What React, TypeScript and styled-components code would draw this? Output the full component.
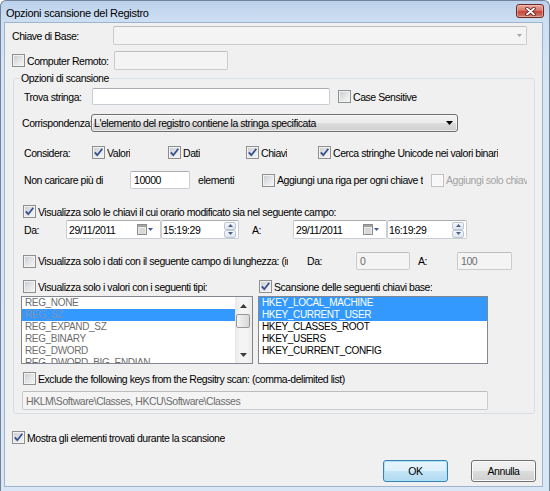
import React from "react";
import styled, { createGlobalStyle } from "styled-components";

const GlobalStyle = createGlobalStyle`
  * { box-sizing: border-box; }
  html, body { margin: 0; padding: 0; background: #ffffff; }
  body {
    font-family: "Liberation Sans", Arial, sans-serif;
    font-size: 10.5px;
    letter-spacing: -0.45px;
    color: #000;
  }
`;

const Window = styled.div`
  width: 550px;
  height: 491px;
  display: flex;
  flex-direction: column;
  border: 1px solid #72839a;
  border-bottom: none;
  border-radius: 6px 6px 0 0;
  background: linear-gradient(180deg, #bcd1eb 0px, #cddff2 21px, #d6e4f4 60px, #d9e6f5 100%);
  overflow: hidden;
`;

const TitleBar = styled.div`
  height: 21px;
  flex: none;
  display: flex;
  align-items: flex-start;
  padding: 0 5px;
`;

const Title = styled.div`
  font-size: 11px;
  letter-spacing: -0.3px;
  line-height: 13px;
  margin-top: 6px;
`;

const CloseButton = styled.div`
  margin-left: auto;
  margin-top: 3px;
  width: 28px;
  height: 14px;
  border: 1px solid #6b2a24;
  border-radius: 3px;
  background: linear-gradient(180deg, #e9a99f 0%, #d9776b 45%, #c4473b 55%, #d07a6e 100%);
  box-shadow: inset 0 0 0 1px rgba(255, 210, 200, 0.45);
  display: flex;
  align-items: center;
  justify-content: center;
`;

const Client = styled.div`
  flex: 1;
  margin: 0 6px 4px 3px;
  background: #f0f0f0;
  border: 1px solid #9db4d0;
  padding: 3px 6px 0 7px;
  display: flex;
  flex-direction: column;
`;

const Row = styled.div<{ $mt?: number; $h: number }>`
  display: flex;
  align-items: center;
  flex: none;
  height: ${(p) => p.$h}px;
  margin-top: ${(p) => p.$mt ?? 0}px;
`;

const Cell = styled.div<{ $w?: number; $pl?: number }>`
  flex: none;
  width: ${(p) => (p.$w ? `${p.$w}px` : "auto")};
  padding-left: ${(p) => p.$pl ?? 0}px;
  white-space: nowrap;
  overflow: hidden;
`;

const Group = styled.fieldset`
  margin: 2px 0 0 1px;
  width: 522px;
  height: 342px;
  padding: 4px 0 2px 8px;
  border: 1px solid #d5dfe5;
  border-radius: 3px;
  min-width: 0;
`;

const Legend = styled.legend`
  padding: 0 1px;
  margin-left: -2px;
  line-height: 12px;
`;

const CheckItem = styled.div<{ $w?: number; $ml?: number }>`
  flex: none;
  display: flex;
  align-items: center;
  gap: 2px;
  width: ${(p) => (p.$w ? `${p.$w}px` : "auto")};
  margin-left: ${(p) => p.$ml ?? 0}px;
  overflow: hidden;
`;

const Box = styled.span<{ $disabled?: boolean }>`
  flex: none;
  width: 13px;
  height: 13px;
  border: 1px solid ${(p) => (p.$disabled ? "#c2c2c2" : "#8e8f8f")};
  background: ${(p) =>
    p.$disabled
      ? "#f7f7f7"
      : "linear-gradient(135deg, #c6c9ce 0%, #e2e4e6 50%, #f7f7f7 100%)"};
  box-shadow: inset 0 0 0 1px ${(p) => (p.$disabled ? "#fbfbfb" : "#f2f2f2")};
  display: flex;
  align-items: center;
  justify-content: center;
`;

const CheckLabel = styled.span<{ $disabled?: boolean }>`
  white-space: nowrap;
  overflow: hidden;
  color: ${(p) => (p.$disabled ? "#a3a3a3" : "#000")};
`;

const Field = styled.div<{ $w: number; $h: number; $disabled?: boolean; $pl?: number }>`
  flex: none;
  width: ${(p) => p.$w}px;
  height: ${(p) => p.$h}px;
  display: flex;
  align-items: center;
  padding-left: ${(p) => p.$pl ?? 3}px;
  background: ${(p) => (p.$disabled ? "#f4f4f4" : "#ffffff")};
  border: 1px solid ${(p) => (p.$disabled ? "#cbcbcb" : "#c9cdd4")};
  border-top-color: ${(p) => (p.$disabled ? "#bdbdbd" : "#abadb3")};
  border-radius: 2px;
  color: ${(p) => (p.$disabled ? "#6d6d6d" : "#000")};
  white-space: nowrap;
  overflow: hidden;
`;

const Push = styled.span<{ $mr: number }>`
  margin-left: auto;
  margin-right: ${(p) => p.$mr}px;
  display: flex;
  align-items: center;
`;

const Combo = styled.div<{ $w: number }>`
  flex: none;
  width: ${(p) => p.$w}px;
  height: 18px;
  display: flex;
  align-items: center;
  padding: 0 4px 0 2px;
  border: 1px solid #707070;
  border-radius: 3px;
  background: linear-gradient(180deg, #f2f2f2 0%, #ebebeb 49%, #dddddd 50%, #cfcfcf 100%);
  box-shadow: inset 0 0 0 1px rgba(255, 255, 255, 0.6);
`;

const ComboText = styled.span`
  flex: 1;
  white-space: nowrap;
  overflow: hidden;
`;

const SpinWrap = styled.div`
  width: 12px;
  height: 16px;
  display: flex;
  flex-direction: column;
`;

const SpinHalf = styled.div`
  flex: 1;
  border: 1px solid #bcc7d5;
  border-radius: 2px;
  background: linear-gradient(180deg, #f6f8fb, #dde5ef);
  display: flex;
  align-items: center;
  justify-content: center;
`;

const ListBox = styled.div<{ $w: number; $ml?: number }>`
  flex: none;
  width: ${(p) => p.$w}px;
  height: 68px;
  margin-left: ${(p) => p.$ml ?? 0}px;
  border: 1px solid #828790;
  background: #ffffff;
  display: flex;
  overflow: hidden;
  font-size: 10px;
  letter-spacing: -0.35px;
`;

const ListItems = styled.div`
  flex: 1;
  min-width: 0;
`;

const ListItem = styled.div<{ $selected?: boolean; $dim?: boolean }>`
  height: 12px;
  line-height: 12px;
  padding-left: 3px;
  white-space: nowrap;
  background: ${(p) => (p.$selected ? "#3399ff" : "transparent")};
  color: ${(p) =>
    p.$dim ? (p.$selected ? "#7d93b3" : "#6d6d6d") : p.$selected ? "#ffffff" : "#000"};
`;

const ScrollBar = styled.div`
  width: 17px;
  flex: none;
  display: flex;
  flex-direction: column;
  align-items: center;
  background: linear-gradient(90deg, #e8e8e8, #f4f4f4 30%, #f4f4f4 70%, #ebebeb);
`;

const ScrollArrow = styled.div`
  height: 17px;
  width: 100%;
  flex: none;
  display: flex;
  align-items: center;
  justify-content: center;
`;

const Thumb = styled.div`
  width: 14px;
  height: 14px;
  margin-left: -2px;
  border: 1px solid #979797;
  border-radius: 2px;
  background: linear-gradient(90deg, #f4f4f4, #e6e6e6 50%, #d8d8d8);
`;

const Spacer = styled.div`
  flex: 1;
`;

const ButtonRow = styled.div`
  display: flex;
  justify-content: flex-end;
  gap: 23px;
  margin-top: 16px;
`;

const Button = styled.div<{ $default?: boolean }>`
  width: 65px;
  height: 22px;
  display: flex;
  align-items: center;
  justify-content: center;
  border-radius: 3px;
  border: 1px solid ${(p) => (p.$default ? "#3c7fb1" : "#707070")};
  background: ${(p) =>
    p.$default
      ? "linear-gradient(180deg, #e8f5fc 0%, #dcf0fa 49%, #c4e6f8 50%, #b0d9f0 100%)"
      : "linear-gradient(180deg, #f2f2f2 0%, #ebebeb 49%, #dddddd 50%, #cfcfcf 100%)"};
  box-shadow: inset 0 0 0 1px ${(p) => (p.$default ? "#a9e4fb" : "#fbfbfb")};
`;

const Tick = () => (
  <svg width="11" height="11" viewBox="0 0 11 11">
    <path d="M1.8 5.3 L4.3 8.2 L9.3 1.8" fill="none" stroke="#36508f" strokeWidth="1.8" />
  </svg>
);

const DropArrow = ({ color, w = 7 }: { color: string; w?: number }) => (
  <svg width={w} height={Math.ceil(w / 2) + 0} viewBox={`0 0 ${w} ${Math.ceil(w / 2)}`}>
    <path d={`M0 0 H${w} L${w / 2} ${Math.ceil(w / 2)} Z`} fill={color} />
  </svg>
);

const UpArrow = ({ color, w = 7 }: { color: string; w?: number }) => (
  <svg width={w} height={Math.ceil(w / 2)} viewBox={`0 0 ${w} ${Math.ceil(w / 2)}`}>
    <path d={`M0 ${Math.ceil(w / 2)} H${w} L${w / 2} 0 Z`} fill={color} />
  </svg>
);

const CloseGlyph = () => (
  <svg width="11" height="9" viewBox="0 0 11 9">
    <path d="M2 1.5 L9 7.5 M9 1.5 L2 7.5" stroke="#5a1a14" strokeWidth="3.4" strokeLinecap="round" />
    <path d="M2 1.5 L9 7.5 M9 1.5 L2 7.5" stroke="#ffffff" strokeWidth="1.8" strokeLinecap="round" />
  </svg>
);

const CalendarIcon = () => (
  <svg width="17" height="11" viewBox="0 0 17 11">
    <rect x="0.5" y="0.5" width="9" height="10" fill="#ececec" stroke="#8c8c8c" />
    <rect x="1" y="1" width="8" height="2" fill="#a4a4a4" />
    <path d="M2 5 H8 M2 7 H8 M2 9 H8" stroke="#c4c4c4" strokeWidth="1" />
    <path d="M11 4 H16 L13.5 7 Z" fill="#3d5e9c" />
  </svg>
);

type CheckProps = {
  label: string;
  checked?: boolean;
  disabled?: boolean;
  w?: number;
  ml?: number;
};

const Check = ({ label, checked, disabled, w, ml }: CheckProps) => (
  <CheckItem $w={w} $ml={ml}>
    <Box $disabled={disabled}>{checked && <Tick />}</Box>
    <CheckLabel $disabled={disabled}>{label}</CheckLabel>
  </CheckItem>
);

const DatePicker = ({ w, value }: { w: number; value: string }) => (
  <Field $w={w} $h={19} $pl={2}>
    {value}
    <Push $mr={6}>
      <CalendarIcon />
    </Push>
  </Field>
);

const TimePicker = ({ w, value }: { w: number; value: string }) => (
  <Field $w={w} $h={19} $pl={1}>
    {value}
    <Push $mr={2}>
      <SpinWrap>
        <SpinHalf>
          <UpArrow color="#4b6186" w={5} />
        </SpinHalf>
        <SpinHalf>
          <DropArrow color="#4b6186" w={5} />
        </SpinHalf>
      </SpinWrap>
    </Push>
  </Field>
);

const valueTypes = [
  "REG_NONE",
  "REG_SZ",
  "REG_EXPAND_SZ",
  "REG_BINARY",
  "REG_DWORD",
  "REG_DWORD_BIG_ENDIAN",
];

const baseKeys = [
  "HKEY_LOCAL_MACHINE",
  "HKEY_CURRENT_USER",
  "HKEY_CLASSES_ROOT",
  "HKEY_USERS",
  "HKEY_CURRENT_CONFIG",
];

export default function App() {
  return (
    <>
      <GlobalStyle />
      <Window>
        <TitleBar>
          <Title>Opzioni scansione del Registro</Title>
          <CloseButton>
            <CloseGlyph />
          </CloseButton>
        </TitleBar>
        <Client>
          <Row $h={19}>
            <Cell $w={101}>Chiave di Base:</Cell>
            <Field $w={414} $h={19} $disabled>
              <Push $mr={4}>
                <DropArrow color="#a5a5a5" w={5} />
              </Push>
            </Field>
          </Row>
          <Row $mt={6} $h={19}>
            <Check w={102} label="Computer Remoto:" />
            <Field $w={114} $h={19} $disabled />
          </Row>

          <Group>
            <Legend>Opzioni di scansione</Legend>
            <Row $h={17}>
              <Cell $w={70} $pl={2}>Trova stringa:</Cell>
              <Field $w={238} $h={17} />
              <Check ml={8} label="Case Sensitive" />
            </Row>
            <Row $mt={9} $h={18}>
              <Cell $w={69}>Corrispondenza:</Cell>
              <Combo $w={367}>
                <ComboText>L'elemento del registro contiene la stringa specificata</ComboText>
                <DropArrow color="#000000" />
              </Combo>
            </Row>
            <Row $mt={14} $h={13}>
              <Cell $w={70} $pl={2}>Considera:</Cell>
              <Check w={76} checked label="Valori" />
              <Check w={78} checked label="Dati" />
              <Check w={72} checked label="Chiavi" />
              <Check checked label="Cerca stringhe Unicode nei valori binari" />
            </Row>
            <Row $mt={12} $h={18}>
              <Cell $w={108} $pl={2}>Non caricare più di</Cell>
              <Field $w={60} $h={18}>10000</Field>
              <Cell $w={72} $pl={8}>elementi</Cell>
              <Check w={161} label="Aggiungi una riga per ogni chiave trovata" />
              <Check ml={8} w={96} disabled label="Aggiungi solo chiavi" />
            </Row>
            <Row $mt={16} $h={13}>
              <Check
                ml={1}
                checked
                label="Visualizza solo le chiavi il cui orario modificato sia nel seguente campo:"
              />
            </Row>
            <Row $mt={2} $h={19}>
              <Cell $w={44} $pl={2}>Da:</Cell>
              <DatePicker w={95} value="29/11/2011" />
              <TimePicker w={78} value="15:19:29" />
              <Cell $w={54} $pl={13}>A:</Cell>
              <DatePicker w={94} value="29/11/2011" />
              <TimePicker w={80} value="16:19:29" />
            </Row>
            <Row $mt={13} $h={18}>
              <Check
                ml={1}
                w={265}
                label="Visualizza solo i dati con il seguente campo di lunghezza: (in byte)"
              />
              <Cell $w={68} $pl={19}>Da:</Cell>
              <Field $w={54} $h={18} $disabled>0</Field>
              <Cell $w={47} $pl={8}>A:</Cell>
              <Field $w={55} $h={18} $disabled>100</Field>
            </Row>
            <Row $mt={10} $h={13}>
              <Check ml={1} w={236} label="Visualizza solo i valori con i seguenti tipi:" />
              <Check checked label="Scansione delle seguenti chiavi base:" />
            </Row>
            <Row $mt={3} $h={68}>
              <ListBox $w={232} $ml={-1}>
                <ListItems>
                  {valueTypes.map((t) => (
                    <ListItem key={t} $dim $selected={t === "REG_SZ"}>
                      {t}
                    </ListItem>
                  ))}
                </ListItems>
                <ScrollBar>
                  <ScrollArrow>
                    <UpArrow color="#3c3c3c" />
                  </ScrollArrow>
                  <Thumb />
                  <Spacer />
                  <ScrollArrow>
                    <DropArrow color="#3c3c3c" />
                  </ScrollArrow>
                </ScrollBar>
              </ListBox>
              <ListBox $w={230} $ml={5}>
                <ListItems>
                  {baseKeys.map((k, i) => (
                    <ListItem key={k} $selected={i < 2}>
                      {k}
                    </ListItem>
                  ))}
                </ListItems>
              </ListBox>
            </Row>
            <Row $mt={8} $h={13}>
              <Check
                ml={1}
                label="Exclude the following keys from the Regsitry scan: (comma-delimited list)"
              />
            </Row>
            <Row $mt={6} $h={19}>
              <Field $w={466} $h={19} $disabled>
                {"HKLM\\Software\\Classes, HKCU\\Software\\Classes"}
              </Field>
            </Row>
          </Group>

          <Row $mt={17} $h={13}>
            <Check checked label="Mostra gli elementi trovati durante la scansione" />
          </Row>
          <ButtonRow>
            <Button $default>OK</Button>
            <Button>Annulla</Button>
          </ButtonRow>
        </Client>
      </Window>
    </>
  );
}
